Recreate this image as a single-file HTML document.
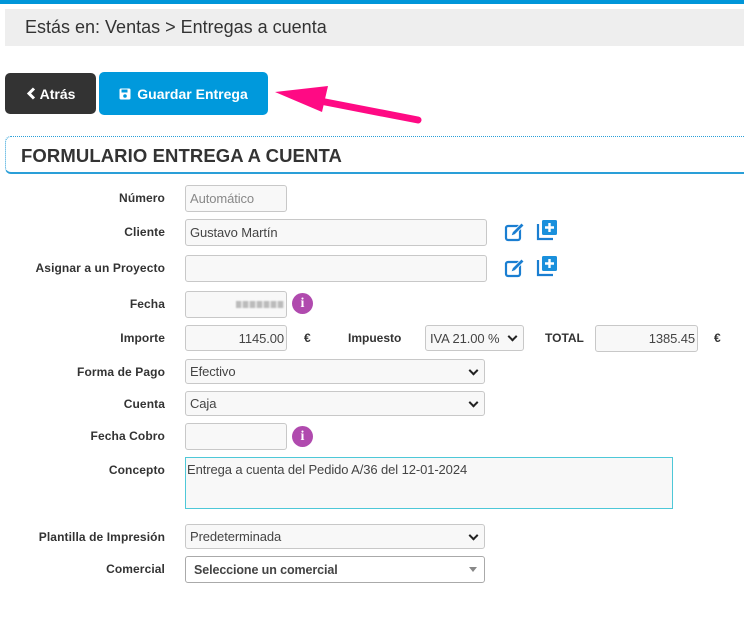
<!DOCTYPE html>
<html><head><meta charset="utf-8"><style>
*{box-sizing:border-box;margin:0;padding:0}
body{width:744px;height:624px;background:#fff;position:relative;overflow:hidden;font-family:"Liberation Sans",sans-serif;color:#333}
.a{position:absolute}
.lbl{position:absolute;right:579px;font-size:12px;font-weight:bold;letter-spacing:0.1px;color:#333;white-space:nowrap}
.in{position:absolute;background:#f8f8f8;border:1px solid #c8c8c8;border-radius:3px;font-size:13px;letter-spacing:-0.1px;color:#444;padding-left:4px;display:flex;align-items:center;white-space:nowrap}
.sel::after{content:"";position:absolute;right:7px;top:50%;width:5px;height:5px;border-right:2px solid #222;border-bottom:2px solid #222;transform:translateY(-70%) rotate(45deg)}
.ic{position:absolute;width:22px;height:22px}
.info{position:absolute;width:21px;height:21px;border-radius:50%;background:#b04aae;color:#fff;font-weight:bold;font-size:14px;text-align:center;line-height:21px;font-family:"Liberation Serif",serif}
</style></head><body>
<div class="a" style="left:0;top:0;width:744px;height:4px;background:#0096d9"></div>
<div class="a" style="left:5px;top:9px;width:739px;height:37px;background:#eeeeee"></div>
<div class="a" style="left:25px;top:17px;font-size:18px;color:#333;letter-spacing:0px">Estás en: Ventas &gt; Entregas a cuenta</div>

<div class="a" style="left:5px;top:73px;width:91px;height:41px;background:#333;border-radius:5px;color:#fff;font-size:14px;font-weight:bold;display:flex;align-items:center;justify-content:center">
<svg width="10" height="13" viewBox="0 0 10 13" style="margin-right:4px"><path d="M8 1.5L3 6.5L8 11.5" stroke="#fff" stroke-width="3" fill="none"/></svg>Atrás</div>
<div class="a" style="left:99px;top:72px;width:169px;height:43px;background:#0099dc;border-radius:5px;color:#fff;font-size:14px;font-weight:bold;display:flex;align-items:center;justify-content:center">
<svg width="12" height="12" viewBox="0 0 12 12" style="margin-right:6px"><rect x="0.5" y="0.5" width="11" height="11" rx="1.5" fill="#fff"/><rect x="2.5" y="1.5" width="6" height="3" fill="#0099dc"/><circle cx="6" cy="8" r="1.8" fill="#0099dc"/></svg>Guardar Entrega</div>

<svg class="a" style="left:270px;top:80px" width="160" height="50"><path d="M148 40L45 20" stroke="#ff0a84" stroke-width="7" stroke-linecap="round"/><path d="M5 12L58 6L52 32Z" fill="#ff0a84"/></svg>

<div class="a" style="left:5px;top:136px;width:745px;height:38px;border:1px dotted #2a9fd8;border-bottom:2px solid #2a9fd8;border-right:none;border-radius:6px 0 0 6px"></div>
<div class="a" style="left:21px;top:145px;font-size:18.5px;font-weight:bold;color:#333;letter-spacing:0.1px">FORMULARIO ENTREGA A CUENTA</div>

<div class="lbl" style="top:191px">Número</div>
<div class="in" style="left:185px;top:185px;width:102px;height:27px;color:#888">Automático</div>

<div class="lbl" style="top:225px">Cliente</div>
<div class="in" style="left:185px;top:219px;width:302px;height:27px">Gustavo Martín</div>

<div class="lbl" style="top:261px">Asignar a un Proyecto</div>
<div class="in" style="left:185px;top:255px;width:302px;height:27px"></div>

<svg class="ic" style="left:504px;top:221px" viewBox="0 0 22 22"><rect x="2" y="5" width="14" height="14" rx="2" fill="none" stroke="#1a7ed1" stroke-width="2.2"/><path d="M7 15l1.5-4 9-9 2.5 2.5-9 9z" fill="#1a7ed1" stroke="#fff" stroke-width="0.8"/></svg>
<svg class="ic" style="left:536px;top:219px" viewBox="0 0 22 22"><path d="M2 5v15h15" fill="none" stroke="#1a7ed1" stroke-width="2.2"/><rect x="6" y="1" width="15" height="15" rx="1.5" fill="#1a90dc"/><path d="M13.5 4v9M9 8.5h9" stroke="#fff" stroke-width="2.4"/></svg>
<svg class="ic" style="left:504px;top:257px" viewBox="0 0 22 22"><rect x="2" y="5" width="14" height="14" rx="2" fill="none" stroke="#1a7ed1" stroke-width="2.2"/><path d="M7 15l1.5-4 9-9 2.5 2.5-9 9z" fill="#1a7ed1" stroke="#fff" stroke-width="0.8"/></svg>
<svg class="ic" style="left:536px;top:255px" viewBox="0 0 22 22"><path d="M2 5v15h15" fill="none" stroke="#1a7ed1" stroke-width="2.2"/><rect x="6" y="1" width="15" height="15" rx="1.5" fill="#1a90dc"/><path d="M13.5 4v9M9 8.5h9" stroke="#fff" stroke-width="2.4"/></svg>

<div class="lbl" style="top:297px">Fecha</div>
<div class="in" style="left:185px;top:291px;width:102px;height:27px;justify-content:flex-end;padding-right:2px"><span style="display:inline-block;width:48px;height:7px;background:repeating-linear-gradient(90deg,#bbb 0 5px,#e5e5e5 5px 7px);filter:blur(0.8px)"></span></div>
<div class="info" style="left:292px;top:293px">i</div>

<div class="lbl" style="top:331px">Importe</div>
<div class="in" style="left:185px;top:325px;width:102px;height:26px;justify-content:flex-end;padding-right:2px">1145.00</div>
<div class="a" style="left:304px;top:331px;font-size:12px;font-weight:bold">€</div>
<div class="a" style="left:348px;top:331px;font-size:12px;font-weight:bold">Impuesto</div>
<div class="in sel" style="left:425px;top:325px;width:99px;height:26px">IVA 21.00 %</div>
<div class="a" style="left:545px;top:331px;font-size:12px;font-weight:bold">TOTAL</div>
<div class="in" style="left:595px;top:325px;width:103px;height:27px;justify-content:flex-end;padding-right:2px">1385.45</div>
<div class="a" style="left:714px;top:331px;font-size:12px;font-weight:bold">€</div>

<div class="lbl" style="top:365px">Forma de Pago</div>
<div class="in sel" style="left:185px;top:359px;width:300px;height:25px">Efectivo</div>

<div class="lbl" style="top:397px">Cuenta</div>
<div class="in sel" style="left:185px;top:391px;width:300px;height:25px">Caja</div>

<div class="lbl" style="top:429px">Fecha Cobro</div>
<div class="in" style="left:185px;top:423px;width:102px;height:27px"></div>
<div class="info" style="left:292px;top:426px">i</div>

<div class="lbl" style="top:463px">Concepto</div>
<div class="in" style="left:185px;top:457px;width:488px;height:52px;border-color:#4ec8d8;border-radius:0;align-items:flex-start;padding:4px 0 0 1px">Entrega a cuenta del Pedido A/36 del 12-01-2024</div>

<div class="lbl" style="top:530px">Plantilla de Impresión</div>
<div class="in sel" style="left:185px;top:524px;width:300px;height:25px">Predeterminada</div>

<div class="lbl" style="top:562px">Comercial</div>
<div class="in" style="left:185px;top:556px;width:300px;height:27px;background:#fff;border-color:#aaa;font-weight:bold;padding-left:8px;font-size:12.5px">Seleccione un comercial<span style="position:absolute;right:7px;top:10px;border-left:4px solid transparent;border-right:4px solid transparent;border-top:5px solid #888"></span></div>
</body></html>
